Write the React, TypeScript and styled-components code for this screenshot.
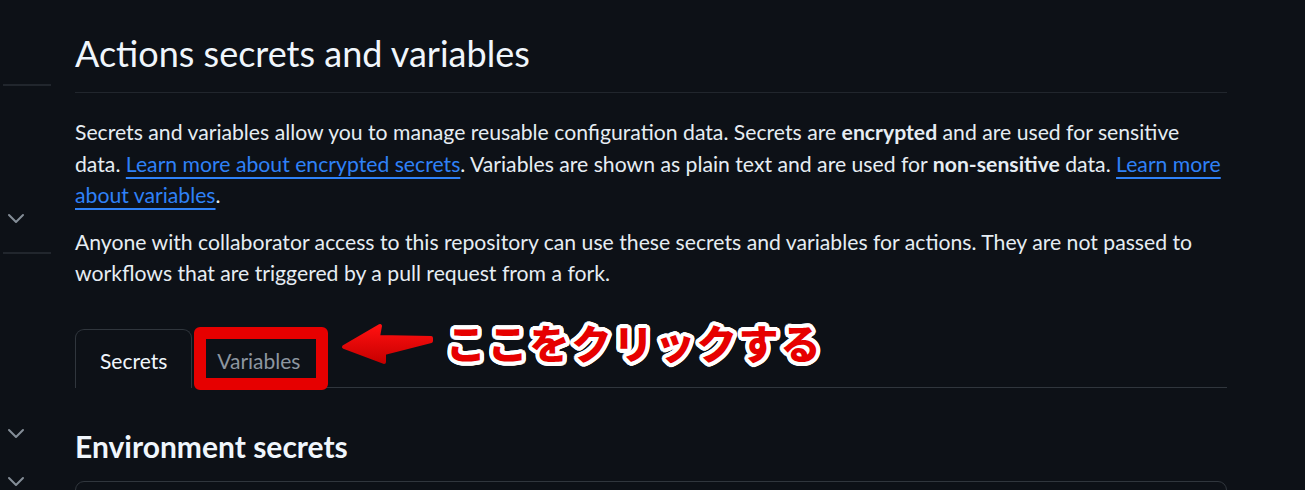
import styled, { createGlobalStyle } from 'styled-components'

const Global = createGlobalStyle`
  html, body {
    margin: 0;
    overflow: hidden;
    background: #0d1117;
  }
  body {
    color: #e6edf3;
    font-family: Lato, "Noto Sans", sans-serif;
  }
`;

const Page = styled.div`
  display: grid;
  grid-template-columns: 48px 1152px;
  column-gap: 24px;
  padding-left: 3px;
  min-height: 490px;
`;

const Sidebar = styled.nav`
  display: flex;
  flex-direction: column;
  padding-top: 84px;
`;

const NavDivider = styled.div`
  height: 2px;
  background: #21262d;
`;

const NavItem = styled.div<{ $height: number }>`
  height: ${(p) => p.$height}px;
  display: flex;
  align-items: flex-end;
  padding-left: 4px;
`;

const Main = styled.main`
  display: flex;
  flex-direction: column;
  padding-top: 26px;
`;

const Subhead = styled.div`
  padding-bottom: 12px;
  border-bottom: 1px solid #21262d;
`;

const Heading = styled.h2`
  margin: 0;
  font-size: 36px;
  line-height: 54px;
  font-weight: 400;
  color: #f0f6fc;
`;

const Para = styled.p<{ $gap: number }>`
  margin: 0 0 ${(p) => p.$gap}px;
  font-size: 21.2px;
  line-height: 31.5px;
  color: #e6edf3;

  &:first-of-type {
    margin-top: 24px;
  }

  strong {
    font-weight: 700;
  }
`;

const Link = styled.a`
  color: #2f81f7;
  text-decoration: underline;
  text-decoration-thickness: 2px;
  text-underline-offset: 5px;
`;

const TabNav = styled.div`
  position: relative;
  display: flex;
  align-items: flex-end;
  height: 58px;
  border-bottom: 1px solid #30363d;
`;

const Tab = styled.div<{ $selected?: boolean }>`
  position: relative;
  height: 59px;
  margin-bottom: -1px;
  padding: 3px 24px 0;
  display: flex;
  align-items: center;
  box-sizing: border-box;
  font-size: 21px;
  border: 1px solid ${(p) => (p.$selected ? '#30363d' : 'transparent')};
  border-bottom: none;
  border-radius: 9px 9px 0 0;
  background: #0d1117;
  color: ${(p) => (p.$selected ? '#f0f6fc' : '#8d96a0')};
`;

const Highlight = styled.span`
  position: absolute;
  left: 1px;
  top: -3px;
  width: 134px;
  height: 63px;
  box-sizing: border-box;
  border: 12px solid #e60000;
  border-radius: 6px;
`;

const Callout = styled.div`
  position: absolute;
  left: 266px;
  top: -11px;
  display: flex;
  align-items: flex-start;
  gap: 13px;

  svg {
    margin-top: 4px;
  }
`;

const outline = Array.from({ length: 24 }, (_, i) => {
  const a = (i / 24) * Math.PI * 2
  return `${(Math.cos(a) * 4).toFixed(2)}px ${(Math.sin(a) * 4).toFixed(2)}px 0 #fff`
}).join(', ')

const CalloutText = styled.span`
  font-family: "Noto Sans CJK JP", sans-serif;
  font-weight: 900;
  font-size: 40px;
  letter-spacing: 1.8px;
  line-height: 48px;
  color: #e60000;
  text-shadow: ${outline};
  white-space: nowrap;
`;

const SectionTitle = styled.h3`
  margin: 36px 0 12px;
  font-size: 30px;
  line-height: 45px;
  font-weight: 700;
  color: #f0f6fc;
`;

const Box = styled.div`
  height: 120px;
  border: 1px solid #30363d;
  border-radius: 9px;
`;

function Chevron() {
  return (
    <svg width='18' height='11' viewBox='0 0 18 11' fill='none'>
      <polyline points='2,2 9,9 16,2' stroke='#848d97' strokeWidth='2' strokeLinecap='round' strokeLinejoin='round' />
    </svg>
  )
}

function Arrow() {
  return (
    <svg width='92' height='44' viewBox='0 0 92 44'>
      <defs>
        <linearGradient id='arrowFill' x1='0' y1='0' x2='0' y2='1'>
          <stop offset='0' stopColor='#ff1010' />
          <stop offset='1' stopColor='#c80000' />
        </linearGradient>
      </defs>
      <polygon
        points='3,25 39,4 37,15 90,16 90,19 43,31 43,40'
        fill='url(#arrowFill)'
        stroke='url(#arrowFill)'
        strokeWidth='4'
        strokeLinejoin='round'
      />
    </svg>
  )
}

export default function App() {
  return (
    <>
      <Global />
      <Page>
        <Sidebar>
          <NavDivider />
          <NavItem $height={138}><Chevron /></NavItem>
          <NavItem $height={28} />
          <NavDivider />
          <NavItem $height={185}><Chevron /></NavItem>
          <NavItem $height={48}><Chevron /></NavItem>
        </Sidebar>

        <Main>
          <Subhead>
            <Heading>Actions secrets and variables</Heading>
          </Subhead>

          <Para $gap={15}>
            Secrets and variables allow you to manage reusable configuration data. Secrets are <strong>encrypted</strong> and are used for sensitive
            data. <Link>Learn more about encrypted secrets</Link>. Variables are shown as plain text and are used for <strong>non-sensitive</strong> data. <Link>Learn more about variables</Link>.
          </Para>
          <Para $gap={39}>
            Anyone with collaborator access to this repository can use these secrets and variables for actions. They are not passed to
            workflows that are triggered by a pull request from a fork.
          </Para>

          <TabNav>
            <Tab $selected>Secrets</Tab>
            <Tab>
              Variables
              <Highlight />
            </Tab>
            <Callout>
              <Arrow />
              <CalloutText>ここをクリックする</CalloutText>
            </Callout>
          </TabNav>

          <SectionTitle>Environment secrets</SectionTitle>
          <Box />
        </Main>
      </Page>
    </>
  )
}
